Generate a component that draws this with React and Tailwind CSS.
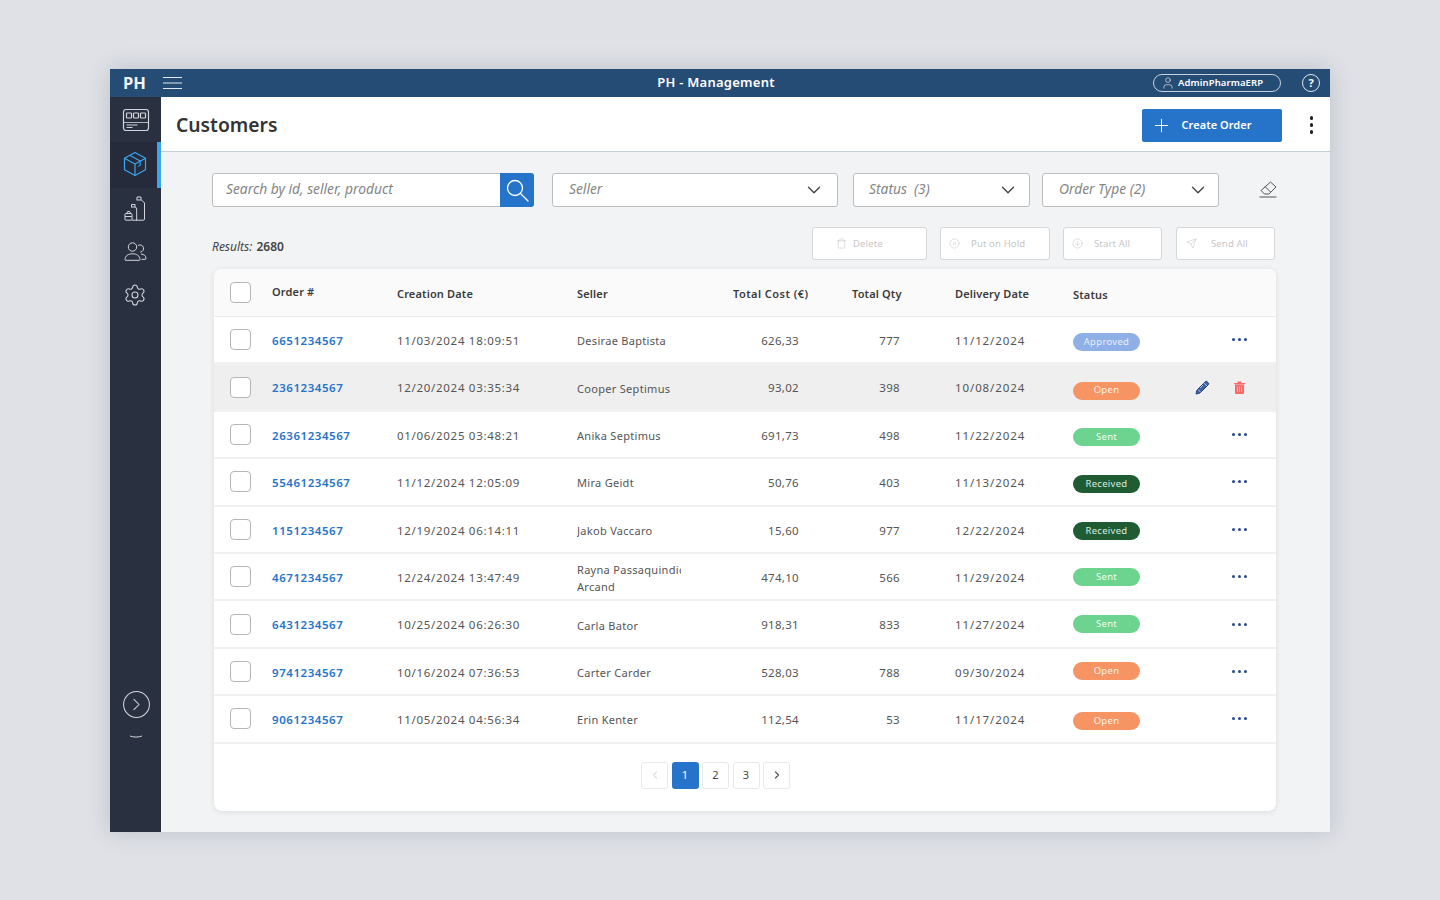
import React from 'react';
import { Plus, ChevronDown, ChevronLeft, ChevronRight, User, CirclePause, CircleArrowDown, Send, Trash, CircleChevronRight, Settings } from 'lucide-react';

const orders = [
  { id: '6651234567', date: '11/03/2024 18:09:51', seller: ['Desirae Baptista'], cost: '626,33', qty: '777', delivery: '11/12/2024', status: 'Approved', shift: 'mt-[4px]' },
  { id: '2361234567', date: '12/20/2024 03:35:34', seller: ['Cooper Septimus'], cost: '93,02', qty: '398', delivery: '10/08/2024', status: 'Open', shift: 'mt-[7px]', hovered: true },
  { id: '26361234567', date: '01/06/2025 03:48:21', seller: ['Anika Septimus'], cost: '691,73', qty: '498', delivery: '11/22/2024', status: 'Sent', shift: 'mt-[6px]' },
  { id: '55461234567', date: '11/12/2024 12:05:09', seller: ['Mira Geidt'], cost: '50,76', qty: '403', delivery: '11/13/2024', status: 'Received', shift: 'mt-[5px]' },
  { id: '1151234567', date: '12/19/2024 06:14:11', seller: ['Jakob Vaccaro'], cost: '15,60', qty: '977', delivery: '12/22/2024', status: 'Received', shift: 'mt-[4px]' },
  { id: '4671234567', date: '12/24/2024 13:47:49', seller: ['Rayna Passaquindici', 'Arcand'], cost: '474,10', qty: '566', delivery: '11/29/2024', status: 'Sent', shift: 'mt-0' },
  { id: '6431234567', date: '10/25/2024 06:26:30', seller: ['Carla Bator'], cost: '918,31', qty: '833', delivery: '11/27/2024', status: 'Sent', shift: 'mt-0' },
  { id: '9741234567', date: '10/16/2024 07:36:53', seller: ['Carter Carder'], cost: '528,03', qty: '788', delivery: '09/30/2024', status: 'Open', shift: 'mt-0' },
  { id: '9061234567', date: '11/05/2024 04:56:34', seller: ['Erin Kenter'], cost: '112,54', qty: '53', delivery: '11/17/2024', status: 'Open', shift: 'mt-[5px]' },
];

const statusClass = {
  Approved: 'bg-[#8fb0e6] text-[#e8eefa]',
  Open: 'bg-[#f79463] text-[#fff1e8]',
  Sent: 'bg-[#6dd48f] text-[#effbf3]',
  Received: 'bg-[#1f5c33] text-[#dcebe0]',
};

const rowGrid = 'grid grid-cols-[42px_125px_180px_104px_127px_147px_118px_117px_86px] pl-4 items-center';

function DeskIcon() {
  return (
    <svg width="28" height="24" viewBox="0 0 28 24" fill="none" stroke="#d3d6dc" strokeWidth="1.2">
      <rect x="1.5" y="1.5" width="25" height="21" rx="2.5" />
      <path d="M1.5 14.5h25" strokeWidth="0.8" />
      <rect x="4.5" y="5" width="5" height="5" rx="0.8" />
      <rect x="11.5" y="5" width="5" height="5" rx="0.8" />
      <rect x="18.5" y="5" width="5" height="5" rx="0.8" />
      <path d="M4.5 17h11M4.5 19.5h6" strokeWidth="1" />
    </svg>
  );
}

function ParcelIcon() {
  return (
    <svg width="24" height="26" viewBox="0 0 24 26" fill="none" stroke="#3ba5f0" strokeWidth="1.2" strokeLinejoin="round">
      <path d="M12 1.5 22.5 7.2v11.6L12 24.5 1.5 18.8V7.2z" />
      <path d="M1.5 7.2 12 13l10.5-5.8M12 13v11.5" />
      <path d="M6.8 4.3 17.2 10.1v3.6" />
      <path d="M15 15.5l3-1.6" strokeWidth="0.9" />
    </svg>
  );
}

function BottlesIcon() {
  return (
    <svg width="22" height="25" viewBox="0 0 22 25" fill="none" stroke="#d3d6dc" strokeWidth="1">
      <path d="M13 4V1h4v3" />
      <path d="M12.5 4h5l3 3v16a1.2 1.2 0 0 1-1.2 1.2H12" />
      <path d="M7.5 11V8.5h3.5V11" />
      <path d="M7 11h4.5l1.2 2v11.2H8" />
      <rect x="1" y="17.5" width="7" height="6.7" rx="1" />
      <path d="M1 20.5h7M2.8 17.5l.8-2h2.2l.8 2" />
    </svg>
  );
}

function PeopleIcon() {
  return (
    <svg width="23" height="19" viewBox="0 0 23 19" fill="none" stroke="#d3d6dc" strokeWidth="1">
      <circle cx="8.5" cy="5" r="4.2" />
      <path d="M1 17.8c0-4 3.2-6 7.5-6s7.5 2 7.5 6c0 .3-.2.5-.5.5h-14c-.3 0-.5-.2-.5-.5z" />
      <path d="M14 3.5a3.6 3.6 0 1 1 2.3 6.6" />
      <path d="M17 12c3 .3 5 1.8 5 4.5 0 .5-.3.8-.8.8H17.5" />
    </svg>
  );
}

function EraserIcon() {
  return (
    <svg width="18" height="17" viewBox="0 0 18 17" fill="none" stroke="#555" strokeWidth="1">
      <path d="M11.5 1 17 6l-7 7H5.5L2 9.5z" strokeLinejoin="round" />
      <path d="M6 5.5 11.5 11" />
      <path d="M0.5 16h17" />
    </svg>
  );
}

function PencilIcon() {
  return (
    <svg width="15" height="15" viewBox="0 0 15 15" fill="#3d63a8" stroke="#24427f" strokeWidth="1" strokeLinejoin="round">
      <path d="M1 14l1-4L10.5 1.5a1 1 0 0 1 1.4 0l1.6 1.6a1 1 0 0 1 0 1.4L5 13z" />
      <path d="M3 9.5 6 12.5M9 3l3 3M5 8l3-3" stroke="#dfe6f2" strokeWidth="0.7" />
    </svg>
  );
}

function RedTrash() {
  return (
    <svg width="11" height="13" viewBox="0 0 11 13">
      <path d="M0 2h11v1.3H0zM3.5 .5h4V2h-4z" fill="#f86a6a" />
      <path d="M1 3.5h9V12a1 1 0 0 1-1 1H2a1 1 0 0 1-1-1z" fill="#f86a6a" />
      <path d="M3.5 5.5v5.5M5.5 5.5v5.5M7.5 5.5v5.500" stroke="#fbd0d0" strokeWidth="0.8" />
    </svg>
  );
}

function SearchGlass() {
  return (
    <svg width="24" height="24" viewBox="0 0 24 24" fill="none" stroke="#fff" strokeWidth="1.3" strokeLinecap="round">
      <circle cx="10" cy="10" r="7.5" />
      <path d="M15.5 15.5 23 23" />
    </svg>
  );
}

function Dots({ vertical }) {
  const dot = vertical ? 'w-[3.5px] h-[3.5px] rounded-full bg-[#222]' : 'w-[3px] h-[3px] rounded-full bg-[#264a8c]';
  return (
    <div className={vertical ? 'flex flex-col gap-[3.5px]' : 'flex gap-[3px]'}>
      <span className={dot} />
      <span className={dot} />
      <span className={dot} />
    </div>
  );
}

function Checkbox() {
  return <div className="w-[21px] h-[21px] rounded-[4px] border border-[#b5b5b5] bg-white" />;
}

function FilterSelect({ label, className }) {
  return (
    <div className={`h-[34px] bg-white border border-[#bdbdbd] rounded-[3px] flex items-center justify-between ${className}`}>
      <span className="text-[13.8px] italic text-[#858585] -mt-[2px]">{label}</span>
      <ChevronDown size={22} strokeWidth={1.5} className="text-[#444]" />
    </div>
  );
}

function BulkButton({ icon: Icon, label, className }) {
  return (
    <button className={`h-[33px] bg-white border border-[#d6d6d6] rounded-[3px] flex items-center text-[9.5px] text-[#c6c6c6] tracking-[0.15px] ${className}`}>
      <Icon size={11} strokeWidth={1.2} />
      <span className="mt-[1px]">{label}</span>
    </button>
  );
}

function PageButton({ children, active }) {
  return (
    <button className={active
      ? 'w-[27px] h-[27px] rounded-[3px] bg-[#2674c9] text-white text-[11px] flex items-center justify-center'
      : 'w-[27px] h-[27px] rounded-[3px] bg-white border border-[#e8e8e8] text-[#444] text-[11px] flex items-center justify-center'}>
      {children}
    </button>
  );
}

export default function App() {
  return (
    <div className="min-h-screen bg-[#dfe1e6] pt-[69px] font-['Noto_Sans',sans-serif]">
      <div className="w-[1220px] h-[763px] ml-[110px] flex flex-col overflow-hidden shadow-[0_0_22px_rgba(40,50,70,0.18)]">
        {/* Top bar */}
        <header className="h-[28px] shrink-0 bg-[#244c75] text-white grid grid-cols-[1fr_auto_1fr] items-center">
          <div className="flex items-center pl-[13px]">
            <span className="text-[16.5px] font-bold text-[#f2f4f7]">PH</span>
            <svg width="19" height="14" viewBox="0 0 19 14" className="ml-[17px]" stroke="#e3e7ec" strokeWidth="1.2">
              <path d="M0 1.5h19M0 7h19M0 12.5h19" />
            </svg>
          </div>
          <div className="text-[13px] font-semibold pr-[8px] tracking-[0.25px]">PH - Management</div>
          <div className="flex items-center justify-end pr-[10px]">
            <div className="w-[128px] h-[18px] border border-[#c9d2dc] rounded-full flex items-center pl-[7px]">
              <User size={14} strokeWidth={1.2} className="text-[#dfe4ea]" />
              <span className="ml-[3px] text-[9.5px] font-semibold tracking-[0.1px]">AdminPharmaERP</span>
            </div>
            <div className="ml-[21px] w-[18px] h-[18px] rounded-full border border-[#e3e7ec] flex items-center justify-center text-[11px] font-bold">?</div>
          </div>
        </header>

        <div className="flex-1 flex min-h-0">
          {/* Sidebar */}
          <aside className="w-[51px] shrink-0 bg-[#293040] flex flex-col">
            <div className="h-[45px] flex items-center justify-center"><DeskIcon /></div>
            <div className="h-[46px] flex items-center justify-center bg-[#252b3a] border-r-4 border-[#3ba5f0] pb-[2px] pl-[2px]">
              <ParcelIcon />
            </div>
            <div className="h-[42px] flex items-center justify-center pb-[2px] pr-[1px]"><BottlesIcon /></div>
            <div className="h-[43px] flex items-center justify-center">
              <PeopleIcon />
            </div>
            <div className="h-[44px] flex items-center justify-center pr-[1px]">
              <Settings size={24} strokeWidth={1.05} className="text-[#d3d6dc]" />
            </div>
            <div className="mt-auto pb-[93px] flex flex-col items-center">
              <CircleChevronRight size={31} strokeWidth={0.8} className="text-[#d3d6dc] -mr-[1px]" />
              <svg width="14" height="4" viewBox="0 0 14 4" fill="none" stroke="#d3d6dc" className="mt-[15px]">
                <path d="M1 1c3 1.4 9 1.4 12 0" />
              </svg>
            </div>
          </aside>

          <main className="flex-1 min-w-0 flex flex-col bg-[#f1f3f5]">
            {/* Page title */}
            <div className="h-[55px] shrink-0 bg-white border-b border-[#c3cedb] flex items-center pl-[15px] pr-[16px] pt-[2px]">
              <h1 className="text-[19.3px] font-semibold text-[#333] leading-none">Customers</h1>
              <button className="ml-auto w-[140px] h-[33px] bg-[#2674c9] rounded-[2px] flex items-center pl-[9px] text-white">
                <Plus size={21} strokeWidth={1.2} />
                <span className="ml-[10px] text-[11px] font-semibold tracking-[0.05px]">Create Order</span>
              </button>
              <div className="ml-[28px] mr-[1px]"><Dots vertical /></div>
            </div>

            <div className="flex-1 pl-[51px]">
              {/* Filters */}
              <div className="flex items-center mt-[21px]">
                <div className="w-[322px] h-[34px] flex bg-white border border-[#bdbdbd] rounded-[3px]">
                  <input
                    readOnly
                    placeholder="Search by id, seller, product"
                    className="flex-1 min-w-0 pl-[13px] pb-[1px] text-[13.8px] italic outline-none bg-transparent placeholder:text-[#858585]"
                  />
                  <div className="w-[34px] -my-px -mr-px bg-[#2674c9] rounded-r-[3px] flex items-center justify-center">
                    <SearchGlass />
                  </div>
                </div>
                <FilterSelect label="Seller" className="w-[286px] ml-[18px] pl-4 pr-[12px]" />
                <FilterSelect label="Status  (3)" className="w-[177px] ml-[15px] pl-[15px] pr-[10px] whitespace-pre" />
                <FilterSelect label="Order Type (2)" className="w-[177px] ml-[12px] pl-4 pr-[9px]" />
                <div className="ml-[40px] -mt-[2px]"><EraserIcon /></div>
              </div>

              {/* Results and bulk actions */}
              <div className="flex items-center mt-[20px] w-[1063px]">
                <div className="text-[12px] text-[#444] mt-[7px]">
                  <span className="italic">Results: </span><span className="font-semibold ml-[1px]">2680</span>
                </div>
                <div className="ml-auto flex">
                  <BulkButton icon={Trash} label="Delete" className="w-[115px] pl-[23px] gap-[6px]" />
                  <BulkButton icon={CirclePause} label="Put on Hold" className="w-[110px] ml-[13px] pl-[8px] gap-[11px]" />
                  <BulkButton icon={CircleArrowDown} label="Start All" className="w-[99px] ml-[13px] pl-[8px] gap-[11px]" />
                  <BulkButton icon={Send} label="Send All" className="w-[99px] ml-[14px] pl-[9px] gap-[14px]" />
                </div>
              </div>

              {/* Table */}
              <div className="w-[1062px] h-[542px] ml-[2px] mt-[9px] bg-white rounded-[8px] shadow-[0_1px_6px_rgba(0,0,0,0.09)] overflow-hidden">
                <div className={`${rowGrid} h-[48px] bg-[#fafafa] border-b border-[#ebebeb] text-[11px] font-semibold text-[#3a3a3a] tracking-[0.15px]`}>
                  <Checkbox />
                  <div className="-mt-[1px]">Order #</div>
                  <div className="mt-[4px]">Creation Date</div>
                  <div className="mt-[4px]">Seller</div>
                  <div className="mt-[4px] pl-[52px] whitespace-nowrap tracking-[0.45px]">Total Cost (€)</div>
                  <div className="mt-[4px] pl-[44px]">Total Qty</div>
                  <div className="mt-[4px]">Delivery Date</div>
                  <div className="mt-[6px]">Status</div>
                  <div />
                </div>
                {orders.map((o) => (
                  <div key={o.id} className={`${rowGrid} h-[47.4px] border-b-2 border-[#f1f1f1] text-[11.5px] text-[#555] tracking-[0.3px] ${o.hovered ? 'bg-[#efefef]' : 'bg-white'}`}>
                    <Checkbox />
                    <div className="mt-[2px] font-semibold text-[#2674c9] tracking-[0.55px]">{o.id}</div>
                    <div className="mt-[2px] tracking-[0.7px]">{o.date}</div>
                    <div className="mt-[2px] overflow-hidden whitespace-nowrap leading-[17px] text-[11px]">
                      {o.seller.map((line) => <div key={line}>{line}</div>)}
                    </div>
                    <div className="mt-[2px] text-right pr-[9px]">{o.cost}</div>
                    <div className="mt-[2px] text-right pr-[55px]">{o.qty}</div>
                    <div className="mt-[2px] tracking-[0.9px]">{o.delivery}</div>
                    <div className={o.shift}>
                      <span className={`w-[67px] h-[18px] rounded-full flex items-center justify-center text-[9.5px] ${statusClass[o.status]}`}>{o.status}</span>
                    </div>
                    {o.hovered ? (
                      <div className="pl-[5px] flex items-center gap-[24px]">
                        <PencilIcon />
                        <RedTrash />
                      </div>
                    ) : (
                      <div className="pl-[42px]"><Dots /></div>
                    )}
                  </div>
                ))}
                <div className="flex gap-[3.5px] ml-[427px] mt-[18px]">
                  <PageButton><ChevronLeft size={12} strokeWidth={2.2} className="text-[#dedede]" /></PageButton>
                  <PageButton active>1</PageButton>
                  <PageButton>2</PageButton>
                  <PageButton>3</PageButton>
                  <PageButton><ChevronRight size={12} strokeWidth={2.4} className="text-[#555]" /></PageButton>
                </div>
              </div>
            </div>
          </main>
        </div>
      </div>
    </div>
  );
}
